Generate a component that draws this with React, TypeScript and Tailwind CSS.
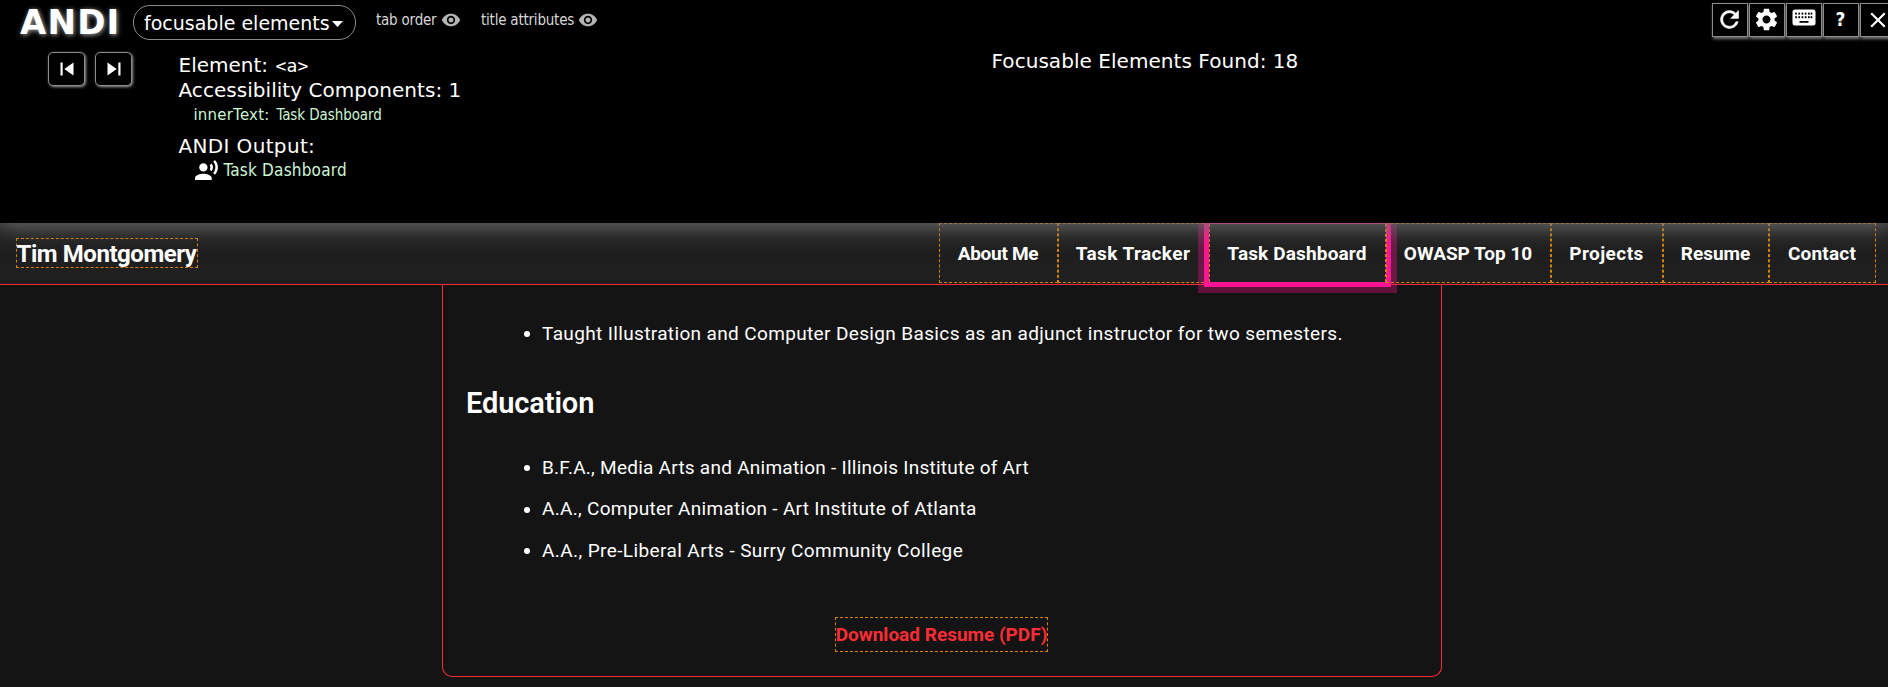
import type { ReactNode } from "react";
import {
  MdClose,
  MdRecordVoiceOver,
  MdSettings,
  MdSkipNext,
  MdSkipPrevious,
  MdVisibility,
} from "react-icons/md";

const keyColumns = [4, 7.2, 10.4, 13.6, 16.8, 19.4];

function RefreshIcon() {
  return (
    <svg width="27" height="27" viewBox="0 0 24 24" fill="currentColor" stroke="currentColor" strokeWidth="0.5">
      <path d="M17.65 6.35A7.96 7.96 0 0 0 12 4a8 8 0 1 0 7.73 10h-2.08A6 6 0 1 1 12 6c1.66 0 3.14.69 4.22 1.78L13 11h7V4l-2.35 2.35z" />
    </svg>
  );
}

function KeyboardIcon() {
  return (
    <svg width="24" height="17" viewBox="0 0 24 17" className="mb-1">
      <rect x="0.5" y="0.5" width="23" height="16" rx="2.5" fill="#fff" />
      <g fill="#000">
        {keyColumns.map((x) => (
          <rect key={x} x={x - 0.8} y="3.6" width="1.7" height="2" />
        ))}
        {keyColumns.map((x) => (
          <rect key={x} x={x - 0.8} y="7.2" width="1.7" height="2" />
        ))}
        <rect x="7.5" y="12" width="9" height="1.8" />
      </g>
    </svg>
  );
}

function ToolButton({ label, children }: { label: string; children: ReactNode }) {
  return (
    <button
      aria-label={label}
      className="flex h-[34px] w-9 shrink-0 items-center justify-center border border-[#8c8c8c] bg-black pr-px pb-px text-white shadow-[1px_2px_3px_#777]"
    >
      {children}
    </button>
  );
}

function StepButton({ label, children }: { label: string; children: ReactNode }) {
  return (
    <button
      aria-label={label}
      className="flex h-[34px] w-[37px] items-center justify-center rounded-[5px] border border-[#8c8c8c] bg-black pb-px text-white shadow-[1px_1px_3px_#999]"
    >
      {children}
    </button>
  );
}

function AndiBar() {
  return (
    <header className="relative z-20 h-[223px] shrink-0 bg-black font-['DejaVu_Sans',sans-serif] text-white shadow-[0_0_22px_3px_#747474]">
      <div className="flex h-[42px] items-start">
        <div className="flex h-[45px] w-[133px] items-center pl-5 text-[34px] font-bold tracking-[1.2px] [text-shadow:1px_1px_5px_#aaa]">
          ANDI
        </div>
        <button className="mt-[5px] flex h-[35px] w-[223px] items-center rounded-[17px] border border-[#8c8c8c] pl-[10px] pt-[2px] text-[19px] whitespace-nowrap">
          focusable elements
          <svg width="11" height="6" viewBox="0 0 11 6" className="ml-[2px]">
            <path d="M0 0h11L5.5 6z" fill="#fff" />
          </svg>
        </button>
        <div className="flex h-10 items-center pl-5 font-['DejaVu_Sans_Condensed','DejaVu_Sans',sans-serif] text-[15px] tracking-[-0.22px] whitespace-nowrap text-[#d6d6d6]">
          <span className="w-[65px]">tab order</span>
          <MdVisibility size={20} className="text-[#b4b4b4]" />
          <span className="ml-[20px] w-[97px]">title attributes</span>
          <MdVisibility size={20} className="text-[#b4b4b4]" />
        </div>
        <div className="-mr-2 ml-auto flex gap-px pt-[3px]">
          <ToolButton label="Refresh">
            <RefreshIcon />
          </ToolButton>
          <ToolButton label="Settings">
            <MdSettings size={27} />
          </ToolButton>
          <ToolButton label="Keyboard shortcuts">
            <KeyboardIcon />
          </ToolButton>
          <ToolButton label="Help">
            <span className="font-['DejaVu_Sans_Condensed','DejaVu_Sans',sans-serif] text-[19px] font-bold">?</span>
          </ToolButton>
          <ToolButton label="Close">
            <MdClose size={26} />
          </ToolButton>
        </div>
      </div>

      <div className="flex">
        <div className="flex w-[178.5px] gap-[10px] pl-12 pt-[10px]">
          <StepButton label="Previous element">
            <MdSkipPrevious size={26} />
          </StepButton>
          <StepButton label="Next element">
            <MdSkipNext size={26} />
          </StepButton>
        </div>
        <div className="w-[813px] pt-[11px] whitespace-nowrap">
          <p className="h-[25px] text-[20px] leading-[25px]">
            Element:{" "}
            <code className="ml-px font-['DejaVu_Sans_Mono',monospace] text-[18px] tracking-[0.2px]">&lt;a&gt;</code>
          </p>
          <p className="h-[26px] text-[20px] leading-[25px] tracking-[0.04px]">Accessibility Components: 1</p>
          <p className="flex h-[22px] pl-[15px] text-[15px] leading-[22px] text-[#ccf5d2]">
            <span className="w-[83px] tracking-[0.2px]">innerText:</span>
            <span className="font-['DejaVu_Sans_Condensed','DejaVu_Sans',sans-serif] tracking-[-0.08px]">
              Task Dashboard
            </span>
          </p>
          <p className="mt-2 h-[25px] text-[20px] leading-[25px] tracking-[0.35px]">ANDI Output:</p>
          <p className="flex h-[23px] items-center pl-[15px] font-['DejaVu_Sans_Condensed','DejaVu_Sans',sans-serif] text-[17px] tracking-[0.2px] text-[#ccf5d2]">
            <MdRecordVoiceOver size={25} className="mr-[5px] text-white" />
            Task Dashboard
          </p>
        </div>
        <p className="pt-[7px] text-[20px] leading-[25px] tracking-[0.05px] whitespace-nowrap">
          Focusable Elements Found: 18
        </p>
      </div>
    </header>
  );
}

const navItems = [
  { label: "About Me", size: "w-[119px] h-[60px] tracking-[-0.3px] border-t border-b" },
  { label: "Task Tracker", size: "w-[151px] h-[60px] tracking-[0.4px] border-t border-b" },
  {
    label: "Task Dashboard",
    size: "w-[177px] h-[58px] mt-px tracking-[0.15px] shadow-[0_0_0_5px_#ff1493,0_0_0_11px_rgba(255,20,147,0.32)]",
  },
  { label: "OWASP Top 10", size: "w-[165px] h-[60px] border-t border-b" },
  { label: "Projects", size: "w-[112px] h-[60px] tracking-[0.45px] border-t border-b" },
  { label: "Resume", size: "w-[106px] h-[60px] border-t border-b" },
  { label: "Contact", size: "w-[107px] h-[60px] tracking-[0.2px] border-t border-b" },
];

function SiteNav() {
  return (
    <nav className="relative z-10 flex h-[62px] shrink-0 justify-between border-b border-[#fb2c36] bg-[#1f1f1f] pr-3 pl-4 font-bold whitespace-nowrap text-white">
      <a className="mt-[15px] flex h-[30px] w-[182px] items-center justify-center border border-dashed border-[#d98200] pt-px pr-px text-[24px] tracking-[-0.45px]">
        Tim Montgomery
      </a>
      <div className="flex">
        {navItems.map((item) => (
          <a
            key={item.label}
            className={`flex items-center justify-center border-x border-dashed border-[#d98200] pt-[3px] pr-px text-[19px] ${item.size}`}
          >
            {item.label}
          </a>
        ))}
      </div>
    </nav>
  );
}

function Bullet({ children }: { children: ReactNode }) {
  return (
    <li className="flex h-[30px] items-center gap-[12px] whitespace-nowrap">
      <span className="size-[6px] rounded-full bg-white" />
      {children}
    </li>
  );
}

export default function App() {
  return (
    <div className="flex h-[687px] flex-col overflow-hidden bg-[#141414] font-['Roboto',sans-serif] text-white">
      <AndiBar />
      <SiteNav />
      <main className="ml-[442px] flex h-[392px] w-[1000px] flex-col rounded-b-[10px] border border-t-0 border-[#fb2c36] pt-[34px] text-[19px]">
        <ul className="pl-[81px]">
          <Bullet>
            <span className="tracking-[0.36px]">
              Taught Illustration and Computer Design Basics as an adjunct instructor for two semesters.
            </span>
          </Bullet>
        </ul>
        <h2 className="mt-[34px] pl-[23px] text-[29px] leading-10 font-semibold tracking-[-0.1px]">Education</h2>
        <ul className="mt-[30px] flex flex-col gap-[11.5px] pl-[81px]">
          <Bullet>
            <span className="tracking-[0.25px]">B.F.A., Media Arts and Animation - Illinois Institute of Art</span>
          </Bullet>
          <Bullet>
            <span className="tracking-[0.29px]">A.A., Computer Animation - Art Institute of Atlanta</span>
          </Bullet>
          <Bullet>
            <span className="tracking-[0.4px]">A.A., Pre-Liberal Arts - Surry Community College</span>
          </Bullet>
        </ul>
        <a className="mt-[51px] mr-px flex h-[35px] w-[213px] items-center justify-center self-center border border-dashed border-[#d98200] pt-[2px] font-bold whitespace-nowrap text-[#fb2c36]">
          Download Resume (PDF)
        </a>
      </main>
    </div>
  );
}
